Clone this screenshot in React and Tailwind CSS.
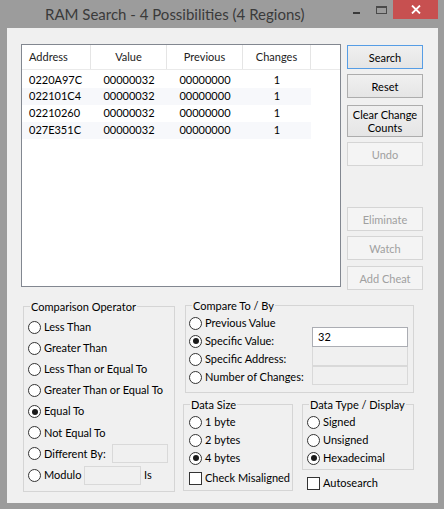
import React from "react";

function Radio({ checked }) {
  return (
    <span className="w-[13px] h-[13px] shrink-0 rounded-full border border-[#333333] bg-white flex items-center justify-center">
      {checked && <span className="w-[6px] h-[6px] rounded-full bg-[#1a1a1a]" />}
    </span>
  );
}

function Check() {
  return <span className="w-[13px] h-[13px] shrink-0 border border-[#333333] bg-white" />;
}

function Group({ title, className, children }) {
  return (
    <div className={"border border-[#d5d5d5] " + className}>
      <div className="-mt-[8px] ml-[6px] px-[1px] w-fit bg-[#f0f0f0] leading-[16px] text-black">{title}</div>
      {children}
    </div>
  );
}

function Btn({ children, kind, className = "" }) {
  const base = "w-[76px] flex items-center justify-center text-center leading-[13px] border ";
  const styles = {
    def: "border-[#569de5] bg-linear-to-b from-[#f0f0f0] to-[#e5e5e5] text-black",
    normal: "border-[#adadad] bg-linear-to-b from-[#f0f0f0] to-[#e5e5e5] text-black",
    disabled: "border-[#d5d5d5] bg-[#f4f4f4] text-[#a0a0a0]",
  };
  return <div className={base + styles[kind] + " " + className}>{children}</div>;
}

const rows = [
  ["0220A97C", "00000032", "00000000", "1"],
  ["022101C4", "00000032", "00000000", "1"],
  ["02210260", "00000032", "00000000", "1"],
  ["027E351C", "00000032", "00000000", "1"],
];

export default function App() {
  return (
    <div className="w-[444px] h-[509px] bg-[#9c9c9c] flex flex-col font-['Lato',sans-serif] text-[11px] text-black">
      {/* Title bar */}
      <div className="h-[28px] flex shrink-0">
        <div className="ml-[45px] mt-[3px] text-[15px] leading-[22px] text-[#3a3a3a]">
          RAM Search - 4 Possibilities (4 Regions)
        </div>
        <div className="ml-auto flex items-start">
          <div className="w-[7px] h-[2px] bg-[#3a3a3a] mt-[12px]" />
          <div className="ml-[16px] mt-[6px] w-[11px] h-[8px] border border-t-2 border-[#4a4a4a]" />
          <div className="ml-[6px] w-[45px] h-[19px] bg-[#c75050] flex items-center justify-center">
            <svg width="10" height="9" viewBox="0 0 10 9">
              <path d="M1 0.5 L9 8.5 M9 0.5 L1 8.5" stroke="white" strokeWidth="1.8" />
            </svg>
          </div>
          <div className="w-[6px]" />
        </div>
      </div>

      {/* Client area */}
      <div className="ml-[7px] w-[431px] h-[475px] bg-[#f0f0f0] pl-[14px] pt-[16px] flex flex-col">
        <div className="flex items-start">
          {/* List view */}
          <div className="w-[320px] h-[243px] border border-[#828790] bg-white flex flex-col">
            <div className="flex h-[25px] border-b border-[#eaeaea] text-[#222]">
              <div className="w-[69px] border-r border-[#e5e5e5] flex items-center pl-[7px]">Address</div>
              <div className="w-[76px] border-r border-[#e5e5e5] flex items-center justify-center">Value</div>
              <div className="w-[76px] border-r border-[#e5e5e5] flex items-center justify-center">Previous</div>
              <div className="w-[68px] border-r border-[#e5e5e5] flex items-center justify-center">Changes</div>
            </div>
            <div className="pt-[1.5px] flex flex-col">
              {rows.map((r, i) => (
                <div key={i} className={"flex w-[289px] h-[16.8px] items-center " + (i % 2 === 1 ? "bg-[#f7f8fb]" : "")}>
                  <div className="w-[69px] pl-[7px]">{r[0]}</div>
                  <div className="w-[76px] text-center">{r[1]}</div>
                  <div className="w-[76px] text-center">{r[2]}</div>
                  <div className="w-[68px] text-center">{r[3]}</div>
                </div>
              ))}
            </div>
          </div>

          {/* Buttons */}
          <div className="ml-[6px] flex flex-col">
            <Btn kind="def" className="mt-[1px] h-[24px]">Search</Btn>
            <Btn kind="normal" className="mt-[5px] h-[24px]">Reset</Btn>
            <Btn kind="normal" className="mt-[7px] h-[32px]">Clear Change<br />Counts</Btn>
            <Btn kind="disabled" className="mt-[5px] h-[24px]">Undo</Btn>
            <Btn kind="disabled" className="mt-[41px] h-[24px]">Eliminate</Btn>
            <Btn kind="disabled" className="mt-[5px] h-[24px]">Watch</Btn>
            <Btn kind="disabled" className="mt-[6px] h-[24px]">Add Cheat</Btn>
          </div>
        </div>

        {/* Lower part */}
        <div className="mt-[16px] ml-[2px] flex items-start">
          <Group title="Comparison Operator" className="w-[152px] h-[186px]">
            <div className="pt-[1.5px] flex flex-col">
              {["Less Than", "Greater Than", "Less Than or Equal To", "Greater Than or Equal To"].map((t) => (
                <div key={t} className="h-[21.15px] flex items-center pl-[4px]">
                  <Radio />
                  <span className="ml-[3px]">{t}</span>
                </div>
              ))}
              <div className="h-[21.15px] flex items-center pl-[4px]">
                <Radio checked />
                <span className="ml-[3px]">Equal To</span>
              </div>
              <div className="h-[21.15px] flex items-center pl-[4px]">
                <Radio />
                <span className="ml-[3px]">Not Equal To</span>
              </div>
              <div className="h-[21.15px] flex items-center pl-[4px]">
                <Radio />
                <span className="ml-[3px]">Different By:</span>
                <span className="ml-auto mr-[6px] w-[56px] h-[19px] border border-[#d9d9d9] bg-[#f0f0f0]" />
              </div>
              <div className="h-[21.15px] flex items-center pl-[4px]">
                <Radio />
                <span className="ml-[3px] w-[37px]">Modulo</span>
                <span className="ml-[3px] w-[57px] h-[19px] border border-[#d9d9d9] bg-[#f0f0f0]" />
                <span className="ml-[3px]">Is</span>
              </div>
            </div>
          </Group>

          <div className="ml-[10px] -mt-[1px] flex flex-col">
            <Group title="Compare To / By" className="w-[229px] h-[88px]">
              <div className="flex">
                <div className="flex flex-col pl-[3px]">
                  {[
                    ["Previous Value", false],
                    ["Specific Value:", true],
                    ["Specific Address:", false],
                    ["Number of Changes:", false],
                  ].map(([t, c]) => (
                    <div key={t} className="h-[18px] flex items-center">
                      <Radio checked={c} />
                      <span className="ml-[3px]">{t}</span>
                    </div>
                  ))}
                </div>
                <div className="ml-auto mr-[5px] mt-[13px] flex flex-col w-[96px]">
                  <div className="h-[19.5px] border border-[#abadb3] bg-white flex items-center pl-[5px]">32</div>
                  <div className="h-[19px] border border-[#d9d9d9] border-t-0 bg-[#f0f0f0]" />
                  <div className="h-[19px] border border-[#d9d9d9] bg-[#f0f0f0]" />
                </div>
              </div>
            </Group>

            <div className="mt-[11px] -ml-[2px] flex items-start">
              <Group title="Data Size" className="w-[110px] h-[87px]">
                <div className="flex flex-col pl-[5px]">
                  {[
                    ["1 byte", false],
                    ["2 bytes", false],
                    ["4 bytes", true],
                  ].map(([t, c]) => (
                    <div key={t} className="h-[18px] flex items-center">
                      <Radio checked={c} />
                      <span className="ml-[3px]">{t}</span>
                    </div>
                  ))}
                  <div className="h-[22px] flex items-center">
                    <Check />
                    <span className="ml-[3px]">Check Misaligned</span>
                  </div>
                </div>
              </Group>
              <div className="ml-[9px] flex flex-col">
                <Group title="Data Type / Display" className="w-[112px] h-[66px]">
                  <div className="flex flex-col pl-[4px]">
                    {[
                      ["Signed", false],
                      ["Unsigned", false],
                      ["Hexadecimal", true],
                    ].map(([t, c]) => (
                      <div key={t} className="h-[18px] flex items-center">
                        <Radio checked={c} />
                        <span className="ml-[3px]">{t}</span>
                      </div>
                    ))}
                  </div>
                </Group>
                <div className="mt-[4px] h-[18px] flex items-center pl-[5px]">
                  <Check />
                  <span className="ml-[3px]">Autosearch</span>
                </div>
              </div>
            </div>
          </div>
        </div>
      </div>
    </div>
  );
}
